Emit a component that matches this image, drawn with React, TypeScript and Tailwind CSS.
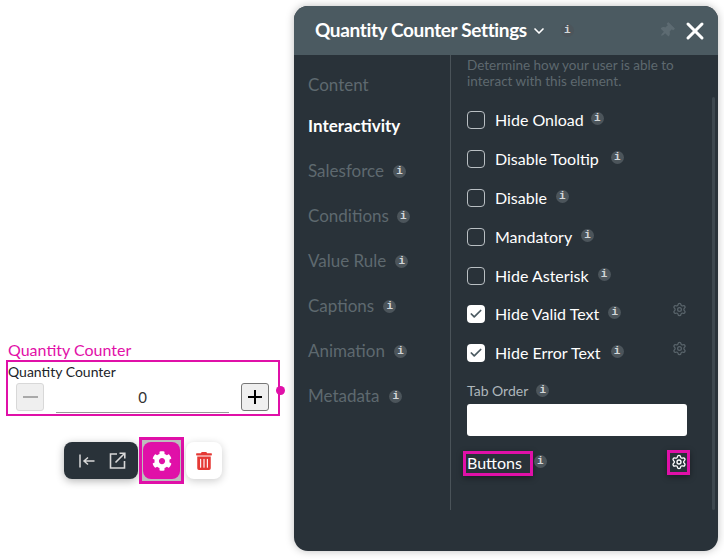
import React from 'react';
import { Check, ChevronDown, Settings, X } from 'lucide-react';
import { FaCog, FaTrashAlt, FaThumbtack } from 'react-icons/fa';

const Info = ({ className = '' }: { className?: string }) => (
  <span className={`inline-flex h-[13px] w-[13px] shrink-0 items-center justify-center rounded-full bg-[#4c555b] text-[11px] leading-none font-bold text-[#d2d6d8] font-['Liberation_Mono',monospace] ${className}`}>
    i
  </span>
);

const navItems = [
  { label: 'Salesforce', gap: 'ml-[9px]' },
  { label: 'Conditions', gap: 'ml-[8px]' },
  { label: 'Value Rule', gap: 'ml-[9px]' },
  { label: 'Captions', gap: 'ml-[9px]' },
  { label: 'Animation', gap: 'ml-[9px]' },
  { label: 'Metadata', gap: 'ml-[10px]' },
];

const options = [
  { label: 'Hide Onload', checked: false, gap: 'ml-[7px]' },
  { label: 'Disable Tooltip', checked: false, gap: 'ml-[12px]' },
  { label: 'Disable', checked: false, gap: 'ml-[9px]' },
  { label: 'Mandatory', checked: false, gap: 'ml-[9px]' },
  { label: 'Hide Asterisk', checked: false, gap: 'ml-[9px]' },
  { label: 'Hide Valid Text', checked: true, gap: 'ml-[9px]' },
  { label: 'Hide Error Text', checked: true, gap: 'ml-[10px]' },
];

const CounterWidget = () => (
  <div className="flex flex-col items-start pl-[6px] pt-[340px]">
    <div className="pl-[2px] text-[16px] leading-[20px] text-[#e20fa8]">Quantity Counter</div>
    <div className="relative h-[56px] w-[274px] border-2 border-[#e010a8] text-black">
      <div className="h-[20px] text-[14px] leading-[20px] text-[#1c2429]">Quantity Counter</div>
      <div className="flex items-start pl-[8px] pr-[9px] pt-[1px]">
        <div className="flex h-[28px] w-[28px] items-center justify-center rounded-[3px] border border-[#d8d8d8] bg-[#efefef]">
          <div className="h-[2px] w-[15px] bg-[#a9a9a9]" />
        </div>
        <div className="ml-[12px] mr-[12px] flex h-[30px] flex-1 items-center justify-center border-b border-[#999] text-[15px] text-[#333]">0</div>
        <div className="flex h-[28px] w-[28px] items-center justify-center rounded-[3px] border border-[#777] bg-[#efefef]">
          <svg width="16" height="16" viewBox="0 0 16 16"><path d="M8 1v14M1 8h14" stroke="#000" strokeWidth="2" /></svg>
        </div>
      </div>
      <div className="absolute right-[-7px] top-[24px] h-[9px] w-[9px] rounded-full bg-[#e010a8]" />
    </div>
    <div className="ml-[58px] mt-[21px] flex items-center">
      <div className="flex h-[37px] w-[74px] items-center justify-center gap-[14px] rounded-[8px] bg-[#293239] pl-[2px] text-[#d8d8d8] shadow-[0_2px_8px_rgba(0,0,0,0.3)]">
        <svg width="16" height="16" viewBox="0 0 16 16" fill="none" stroke="currentColor" strokeWidth="1.5">
          <path d="M1 1.5v13M15.5 8H5M9 4.5 5 8l4 3.5" />
        </svg>
        <svg width="17" height="17" viewBox="0 0 17 17" fill="none" stroke="currentColor" strokeWidth="1.6">
          <path d="M8 2H1.5v14h14V9M6.5 10.5 15.5 1.5M10.5 1.2h5.3v5.3" />
        </svg>
      </div>
      <div className="ml-[1px] flex h-[47px] w-[45px] items-center justify-center border-[3px] border-[#e010a8] bg-[#bdbdbd]">
        <div className="flex h-[37px] w-[37px] items-center justify-center rounded-[8px] bg-[#e010a8]">
          <FaCog size={20} className="text-white" />
        </div>
      </div>
      <div className="ml-[2px] flex h-[37px] w-[36px] items-center justify-center rounded-[8px] bg-white shadow-[0_2px_8px_rgba(0,0,0,0.2)]">
        <FaTrashAlt size={18} className="text-[#e53935]" />
      </div>
    </div>
  </div>
);

export default function App() {
  return (
    <div className="flex h-[559px] w-[724px] overflow-hidden bg-white font-['Lato',sans-serif]">
      <div className="w-[294px] shrink-0">
        <CounterWidget />
      </div>
      <div className="mt-[6px] flex h-[545px] w-[424px] shrink-0 flex-col overflow-hidden rounded-[14px] bg-[#293239] shadow-[0_0_8px_rgba(0,0,0,0.25)]">
        <div className="flex h-[49px] shrink-0 items-center bg-[#4b5a61] pl-[21px] pr-[9px]">
          <span className="text-[19px] font-bold tracking-[-0.36px] text-white">Quantity Counter Settings</span>
          <ChevronDown size={16} strokeWidth={2.5} className="ml-[4px] text-white" />
          <Info className="ml-[14px]" />
          <FaThumbtack size={15} className="ml-auto rotate-45 text-[#5d6b72]" />
          <X size={28} strokeWidth={2.6} className="ml-[7px] text-white" />
        </div>
        <div className="flex flex-1 items-start">
          <div className="h-[455px] w-[157px] shrink-0 border-r border-[#4a5359] pl-[14px]">
            <div className="pt-[19px] text-[17px] leading-[22px] text-[#5e696f]">Content</div>
            <div className="mt-[19px] text-[17px] leading-[22px] font-bold text-white">Interactivity</div>
            <div className="mt-[23px] flex flex-col gap-[23px]">
              {navItems.map((item) => (
                <div key={item.label} className="flex h-[22px] items-center text-[17px] text-[#5e696f]">
                  {item.label}
                  <Info className={item.gap} />
                </div>
              ))}
            </div>
          </div>
          <div className="relative h-[455px] flex-1 pl-[16px] pr-[24px]">
            <p className="pt-[2px] text-[13.5px] leading-[16px] text-[#5e696f]">
              Determine how your user is able to
              <br />
              interact with this element.
            </p>
            <div className="mt-[12px] flex flex-col">
              {options.map((opt) => (
                <div key={opt.label} className="flex h-[38.8px] items-center">
                  <div className={`flex h-[18px] w-[18px] items-center justify-center rounded-[4px] ${opt.checked ? 'bg-white' : 'border border-[#b9bfc3]'}`}>
                    {opt.checked && <Check size={14} strokeWidth={3} className="text-[#4b5a61]" />}
                  </div>
                  <span className="ml-[10px] text-[16px] text-white">{opt.label}</span>
                  <Info className={`${opt.gap} mb-[3px]`} />
                  {opt.checked && <Settings size={15} className="ml-auto mr-[7px] mb-[10px] text-[#59646b]" />}
                </div>
              ))}
            </div>
            <div className="mt-[9px] flex items-center text-[14px] leading-[18px] text-[#aeb6bb]">
              Tab Order
              <Info className="ml-[8px]" />
            </div>
            <div className="mt-[4px] h-[32px] w-[220px] rounded-[3px] bg-white" />
            <div className="mt-[15px] flex w-[223px] items-start">
              <div className="ml-[-4px] h-[25px] border-[3px] border-[#e010a8] pl-[1px] pr-[8px] text-[16px] leading-[18px] text-white shadow-[0_2px_6px_rgba(0,0,0,0.4)]">Buttons</div>
              <Info className="ml-[1px] mt-[4px]" />
              <div className="ml-auto mt-[-1px] flex h-[25px] w-[23px] items-center justify-center border-[3px] border-[#e010a8] shadow-[0_2px_6px_rgba(0,0,0,0.4)]">
                <Settings size={16} className="text-white" />
              </div>
            </div>
            <div className="absolute right-[3px] top-[42px] h-[413px] w-[3px] rounded-[2px] bg-[#3d474e]" />
          </div>
        </div>
      </div>
    </div>
  );
}
